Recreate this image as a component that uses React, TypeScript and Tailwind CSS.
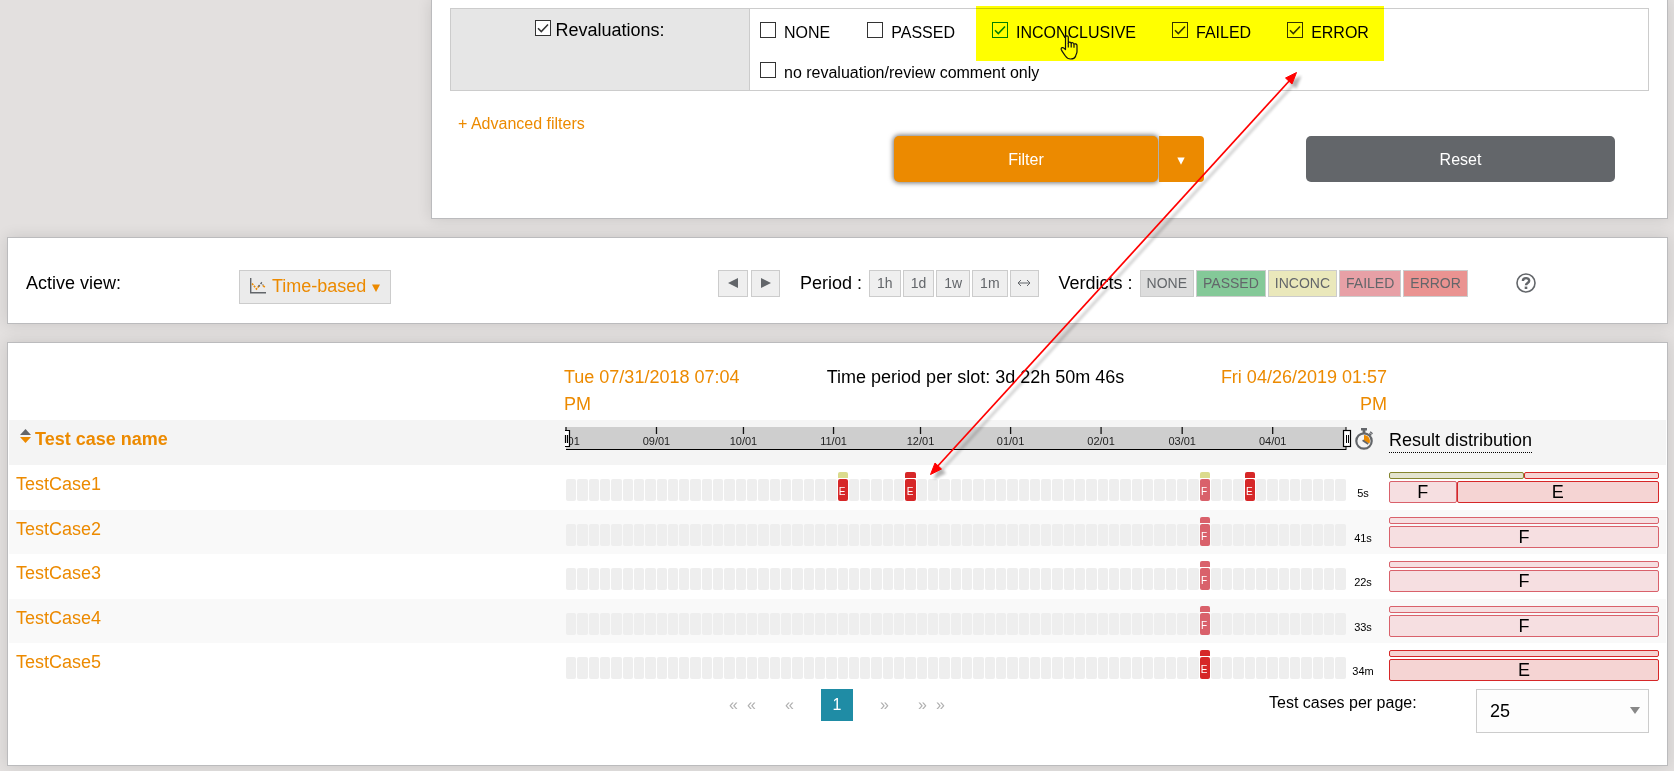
import React from "react";

type Verdict = "E" | "F";

type Mark = { slot: number; verdict: Verdict; cap: "I" | Verdict };
type Share = { kind: "I" | Verdict; percent: number };
type TestCase = {
  name: string;
  duration: string;
  marks: Mark[];
  reviewed: Share[];
  original: Share[];
};

const SLOT_COUNT = 69;

const testCases: TestCase[] = [
  {
    name: "TestCase1",
    duration: "5s",
    marks: [
      { slot: 24, verdict: "E", cap: "I" },
      { slot: 30, verdict: "E", cap: "E" },
      { slot: 56, verdict: "F", cap: "I" },
      { slot: 60, verdict: "E", cap: "E" },
    ],
    reviewed: [
      { kind: "I", percent: 50 },
      { kind: "E", percent: 50 },
    ],
    original: [
      { kind: "F", percent: 25 },
      { kind: "E", percent: 75 },
    ],
  },
  {
    name: "TestCase2",
    duration: "41s",
    marks: [{ slot: 56, verdict: "F", cap: "F" }],
    reviewed: [{ kind: "F", percent: 100 }],
    original: [{ kind: "F", percent: 100 }],
  },
  {
    name: "TestCase3",
    duration: "22s",
    marks: [{ slot: 56, verdict: "F", cap: "F" }],
    reviewed: [{ kind: "F", percent: 100 }],
    original: [{ kind: "F", percent: 100 }],
  },
  {
    name: "TestCase4",
    duration: "33s",
    marks: [{ slot: 56, verdict: "F", cap: "F" }],
    reviewed: [{ kind: "F", percent: 100 }],
    original: [{ kind: "F", percent: 100 }],
  },
  {
    name: "TestCase5",
    duration: "34m",
    marks: [{ slot: 56, verdict: "E", cap: "E" }],
    reviewed: [{ kind: "E", percent: 100 }],
    original: [{ kind: "E", percent: 100 }],
  },
];

const solid = { I: "bg-[#dbdb8d]", F: "bg-[#d9616b]", E: "bg-[#d62728]" };
const outlined = {
  I: "border-[#85852f] bg-[#e4e4d0]",
  F: "border-[#d9616b] bg-[#f6dfe1]",
  E: "border-[#d62728] bg-[#f5d4d3]",
};

const ticks = [
  { at: 0, label: "08/01" },
  { at: 11.6, label: "09/01" },
  { at: 22.75, label: "10/01" },
  { at: 34.3, label: "11/01" },
  { at: 45.45, label: "12/01" },
  { at: 57, label: "01/01" },
  { at: 68.6, label: "02/01" },
  { at: 79, label: "03/01" },
  { at: 90.6, label: "04/01" },
];

function Panel({ className, children }: { className: string; children: React.ReactNode }) {
  return (
    <section
      className={"border border-[#bbbbbd] bg-white shadow-[0_0_14px_rgba(0,0,0,0.12)] " + className}
    >
      {children}
    </section>
  );
}

function Check({
  label,
  checked = false,
  green = false,
  large = false,
}: {
  label: string;
  checked?: boolean;
  green?: boolean;
  large?: boolean;
}) {
  return (
    <label
      className={
        "flex items-baseline whitespace-nowrap " +
        (large ? "gap-1 text-[18px] leading-[27px]" : "gap-2 text-[16px] leading-6")
      }
    >
      <span className={"grid size-4 " + (green ? "text-[#008000]" : "text-[#333333]")}>
        <input
          type="checkbox"
          defaultChecked={checked}
          className="peer size-4 appearance-none border border-current bg-white [grid-area:1/1]"
        />
        <svg
          viewBox="0 0 16 16"
          className="pointer-events-none invisible size-4 [grid-area:1/1] peer-checked:visible"
          fill="none"
          stroke="currentColor"
          strokeWidth="1.5"
        >
          <path d="M3 8.2 6.3 11.6 13 4.4" />
        </svg>
      </span>
      {label}
    </label>
  );
}

function ToolButton({ className, label, children }: { className: string; label?: string; children: React.ReactNode }) {
  return (
    <button
      type="button"
      aria-label={label}
      className={
        "flex h-[27px] items-center justify-center border border-[#cccccc] text-[14px] leading-4 text-[#63666a] " +
        className
      }
    >
      {children}
    </button>
  );
}

function HandCursor() {
  return (
    <svg
      viewBox="0 0 18 25"
      className="pointer-events-none absolute left-[84px] top-[30px] h-[25px] w-[18px]"
      fill="#ffff00"
      stroke="#111"
      strokeWidth="1.2"
      strokeLinejoin="round"
    >
      <path d="M5.5 14.5V2.3C5.5.4 8.3.4 8.3 2.3V8.2C8.6 6.6 11 6.8 11.2 8.4 11.7 7.2 13.9 7.6 14 9.2 14.8 8.4 17 8.8 17 10.6V16.5C17 18.5 15.8 19.6 15.6 21.2 14.6 23.6 12.6 24 10.6 24 8 24 6.6 22.8 5.4 21 4 18.8 2.2 16.6 1.2 14.4.8 12.6 2.8 12 4 13.2Z" />
      <path d="M8.3 8V12.5M11.2 8.4V12.5M14 9.2V12.8" />
    </svg>
  );
}

function FilterPanel() {
  return (
    <Panel className="ml-[424px] border-t-0 px-[18px] pb-9 pt-2">
      <div className="flex border border-[#cccccc]">
        <div className="flex w-[299px] shrink-0 justify-center border-r border-[#cccccc] bg-[#e6e6e6] pt-2">
          <Check label="Revaluations:" checked large />
        </div>
        <div className="flex flex-col gap-4 pb-[5px] pl-[10px] pt-3">
          <div className="flex gap-[37px]">
            <Check label="NONE" />
            <Check label="PASSED" />
            <div className="relative flex gap-9">
              <Check label="INCONCLUSIVE" checked green />
              <Check label="FAILED" checked />
              <Check label="ERROR" checked />
              <div className="pointer-events-none absolute -bottom-4 -left-4 -right-[15px] -top-[15px] bg-[#ffff00] mix-blend-multiply" />
              <div className="pointer-events-none absolute -left-4 -top-4">
                <HandCursor />
              </div>
            </div>
          </div>
          <Check label="no revaluation/review comment only" />
        </div>
      </div>
      <a href="#advanced" className="ml-2 mt-[21px] inline-block align-top text-[16px] leading-6 text-[#ec8a00]">
        + Advanced filters
      </a>
      <div className="flex justify-end gap-[102px] pr-[34px] text-[16px] text-white">
        <div className="flex gap-px">
          <button
            type="button"
            className="h-[46px] w-[264px] rounded-[5px] bg-[#ec8a00] pt-px shadow-[0_0_5px_1px_rgba(0,0,0,0.55)]"
          >
            Filter
          </button>
          <button
            type="button"
            aria-label="Filter options"
            className="flex h-[46px] w-[45px] items-center justify-center rounded-r-[4px] bg-[#ec8a00] pr-[2px]"
          >
            <svg viewBox="0 0 8 8" className="mt-1 size-2" fill="currentColor">
              <path d="M.3 .5H7.700L4 7.800Z" />
            </svg>
          </button>
        </div>
        <button type="button" className="h-[46px] w-[309px] rounded-[5px] bg-[#63666a] pt-px">
          Reset
        </button>
      </div>
    </Panel>
  );
}

function ViewPanel() {
  return (
    <Panel className="mt-[18px] flex h-[87px] items-start pl-[18px] pt-[31px] text-[18px] leading-[27px]">
      <div className="w-[213px] shrink-0 pt-px">Active view:</div>
      <div className="w-[479px] shrink-0">
        <button
          type="button"
          className="mt-px flex h-[34px] items-center gap-[6px] border border-[#cccccc] bg-[#ebebeb] px-[10px] pb-[2px] text-[#ec8a00]"
        >
          <svg viewBox="0 0 16 16" className="size-4" fill="none">
            <path d="M.7 0V14.8H16" stroke="#63666a" strokeWidth="1.4" />
            <path d="M2 5.500 4.500 8.500 6.500 11 9 8" stroke="#ec8a00" strokeWidth="1.600" strokeDasharray="2 1" />
            <path d="M8.500 8.500 11.500 5 13 7" stroke="#63666a" strokeWidth="1.600" strokeDasharray="1.8 1.4" />
            <path d="M12.800 7.500 14.800 9.200" stroke="#ec8a00" strokeWidth="1.600" />
          </svg>
          <span>Time-based</span>
          <svg viewBox="0 0 8 8" className="mt-[3px] size-2" fill="currentColor">
            <path d="M0 .5H8L4 8Z" />
          </svg>
        </button>
      </div>
      <div className="flex items-center whitespace-nowrap">
        <div className="flex gap-[3px]">
          <ToolButton className="w-[30px] bg-[#efefef]" label="Previous">
            <svg viewBox="0 0 10 10" className="size-[10px]" fill="currentColor">
              <path d="M10 0V10L0 5Z" />
            </svg>
          </ToolButton>
          <ToolButton className="w-[29px] bg-[#efefef]" label="Next">
            <svg viewBox="0 0 10 10" className="size-[10px]" fill="currentColor">
              <path d="M0 0V10L10 5Z" />
            </svg>
          </ToolButton>
        </div>
        <span className="ml-5 pt-px">Period :</span>
        <div className="ml-[7px] flex gap-[2px]">
          {["1h", "1d", "1w", "1m"].map((p) => (
            <ToolButton key={p} className="bg-[#efefef] px-[7px]">
              {p}
            </ToolButton>
          ))}
          <ToolButton className="w-[29px] bg-[#efefef]" label="Full range">
            <svg viewBox="0 0 14 8" className="h-2 w-[14px]" fill="none" stroke="currentColor">
              <path d="M1 4H13M4 1 1 4 4 7M10 1 13 4 10 7" />
            </svg>
          </ToolButton>
        </div>
        <span className="ml-5 pt-px">Verdicts :</span>
        <div className="ml-[7px] flex gap-[2px]">
          <ToolButton className="bg-[#dddddd] px-[6px]">NONE</ToolButton>
          <ToolButton className="bg-[#84c998] px-[6px]">PASSED</ToolButton>
          <ToolButton className="bg-[#eae8bb] px-[6px]">INCONC</ToolButton>
          <ToolButton className="bg-[#e7a0a6] px-[6px]">FAILED</ToolButton>
          <ToolButton className="bg-[#ea9391] px-[6px]">ERROR</ToolButton>
        </div>
        <button type="button" aria-label="Help" className="ml-12 text-[#63666a]">
          <svg viewBox="0 0 20 20" className="size-5" fill="none" stroke="currentColor">
            <circle cx="10" cy="10" r="9" strokeWidth="1.6" />
            <path d="M6.900 8C6.900 4.200 13.200 4.200 13.200 7.700 13.200 9.900 10 10 10 12.300" strokeWidth="2.400" />
            <path d="M10 13.600V16" strokeWidth="2.600" />
          </svg>
        </button>
      </div>
    </Panel>
  );
}

function TimeAxis() {
  return (
    <svg className="block h-6 w-full overflow-visible text-[11px]" role="img" aria-label="Time range">
      <rect width="100%" height="22" fill="#cecece" />
      <line x1="0" x2="100%" y1="22.5" y2="22.5" stroke="#000" />
      <line x1="100%" x2="100%" y1="0" y2="23" stroke="#000" />
      {ticks.map((t) => (
        <g key={t.label}>
          <line x1={t.at + "%"} x2={t.at + "%"} y1="0" y2="7" stroke="#111" strokeWidth="1.3" />
          <text x={t.at + "%"} y="18" textAnchor="middle" fill="#222">
            {t.label}
          </text>
        </g>
      ))}
      <rect x="-15" y="8" width="14" height="15" fill="#f4f4f4" />
      <rect x="-1" y="4" width="4" height="15" fill="#fff" />
      <path d="M-1 3.5H3.5V19.5H-1M-.5 8V16M1.5 8V16" stroke="#000" strokeWidth="1.2" fill="none" />
      <svg x="100%" overflow="visible">
        <rect x="-2.5" y="3.5" width="7" height="16" fill="#fff" stroke="#000" strokeWidth="1.2" />
        <path d="M.5 8V16M2.5 8V16" stroke="#000" />
      </svg>
    </svg>
  );
}

function Timeline({ marks }: { marks: Mark[] }) {
  return (
    <div className="flex items-end gap-px">
      {Array.from({ length: SLOT_COUNT }, (_, i) => {
        const mark = marks.find((m) => m.slot === i);
        if (!mark) {
          return <div key={i} className="h-[22px] flex-1 basis-0 rounded-[2px] bg-[#eeeeee]" />;
        }
        return (
          <div key={i} className="flex min-w-0 flex-1 basis-0 flex-col gap-px">
            <div className={"h-[6px] rounded-t-[2px] " + solid[mark.cap]} />
            <div
              className={
                "h-[22px] overflow-hidden rounded-[2px] pr-px pt-1 text-center text-[10px] leading-[18px] text-white " +
                solid[mark.verdict]
              }
            >
              {mark.verdict}
            </div>
          </div>
        );
      })}
    </div>
  );
}

function Shares({ shares, labelled = false }: { shares: Share[]; labelled?: boolean }) {
  return (
    <div className="flex">
      {shares.map((s) => (
        <div
          key={s.kind}
          className={
            "rounded-[2px] border text-center text-[18px] leading-5 " +
            (labelled ? "h-[22px] " : "h-[7px] ") +
            outlined[s.kind]
          }
          style={{ width: `${s.percent}%` }}
        >
          {labelled ? s.kind : null}
        </div>
      ))}
    </div>
  );
}

function Stopwatch() {
  return (
    <svg viewBox="0 0 18 22" className="mx-auto h-[22px] w-[18px]" fill="none">
      <path d="M6 0H12V2.6H10.4V5H7.6V2.6H6Z" fill="#63666a" />
      <path d="M14.3 5.4 16.4 7.2M15.2 3.8 17.6 5.8" stroke="#63666a" strokeWidth="1.4" />
      <circle cx="9" cy="13" r="7.7" stroke="#63666a" strokeWidth="2.2" />
      <path d="M9 13V7A6 6 0 0 1 14.4 15.4Z" fill="#ec8a00" />
      <path d="M7.6 12.2 13.2 16" stroke="#63666a" strokeWidth="1.8" />
    </svg>
  );
}

function ResultsPanel() {
  return (
    <Panel className="mt-[18px] px-px">
      <div className="flex justify-between pb-[2px] pl-[555px] pr-[279px] pt-[21px] text-[18px] leading-[27px]">
        <a href="#from" className="w-[190px] text-[#ec8a00]">
          Tue 07/31/2018 07:04 PM
        </a>
        <span>Time period per slot: 3d 22h 50m 46s</span>
        <a href="#to" className="w-[190px] text-right text-[#ec8a00]">
          Fri 04/26/2019 01:57 PM
        </a>
      </div>
      <table className="w-full table-fixed text-left text-[18px] leading-[27px]">
        <thead>
          <tr className="h-[45px] bg-[#f4f4f4] align-top">
            <th className="w-[557px] pl-[11px] pt-[6px] font-bold">
              <button type="button" className="flex items-start gap-1 text-[#ec8a00]">
                <svg viewBox="0 0 11 14" className="mt-[3px] h-[14px] w-[11px]">
                  <path d="M5.5 0 11 6H0Z" fill="#63666a" />
                  <path d="M5.5 14 11 8H0Z" fill="#ec8a00" />
                </svg>
                Test case name
              </button>
            </th>
            <th className="pt-[7px] font-normal">
              <TimeAxis />
            </th>
            <th className="w-[43px] pr-[7px] pt-2 font-normal">
              <Stopwatch />
            </th>
            <th className="w-[277px] pt-2 font-normal">
              <span className="inline-block border-b border-dotted border-black align-top leading-6">
                Result distribution
              </span>
            </th>
          </tr>
        </thead>
        <tbody>
          {testCases.map((t) => (
            <tr key={t.name} className="h-[45px] align-top even:h-[44px] even:bg-[#f9f9f9]">
              <td className="pl-[7px] pt-[6px]">
                <a href={"#" + t.name} className="text-[#ec8a00]">
                  {t.name}
                </a>
              </td>
              <td className="pt-[7px]">
                <div className="flex h-[29px] flex-col justify-end">
                  <Timeline marks={t.marks} />
                </div>
              </td>
              <td className="pr-[9px] pt-5 text-center text-[11px] leading-4">{t.duration}</td>
              <td className="pr-[7px] pt-[7px]">
                <div className="flex flex-col gap-[2px]">
                  <Shares shares={t.reviewed} />
                  <Shares shares={t.original} labelled />
                </div>
              </td>
            </tr>
          ))}
        </tbody>
      </table>
      <div className="flex h-[77px] items-start pl-[710px] pr-[17px] pt-px text-[16px] leading-6">
        <nav aria-label="Pages" className="flex text-center leading-8 text-[#b0b0b0]">
          <a href="#first" className="flex w-[47px] justify-center gap-[9px]">
            <span>«</span>
            <span>«</span>
          </a>
          <a href="#previous" className="w-[47px]">«</a>
          <a href="#page1" aria-current="page" className="mx-2 size-8 bg-[#1f8ca5] text-white">1</a>
          <a href="#next" className="w-[47px]">»</a>
          <a href="#last" className="flex w-[47px] justify-center gap-[9px]">
            <span>»</span>
            <span>»</span>
          </a>
        </nav>
        <label htmlFor="page-size" className="ml-auto w-[207px] pt-[2px]">
          Test cases per page:
        </label>
        <div className="relative w-[173px]">
          <select
            id="page-size"
            defaultValue="25"
            className="block h-[44px] w-full appearance-none border border-[#cccccc] bg-[#fdfdfd] pl-[13px] text-[18px]"
          >
            <option>10</option>
            <option>25</option>
            <option>50</option>
          </select>
          <svg
            viewBox="0 0 10 7"
            className="pointer-events-none absolute right-[9px] top-[18px] h-[7px] w-[10px]"
            fill="#888888"
          >
            <path d="M0 0H10L5 7Z" />
          </svg>
        </div>
      </div>
    </Panel>
  );
}

function Annotation() {
  return (
    <svg
      viewBox="0 0 380 420"
      className="pointer-events-none absolute left-[924px] top-[65px] h-[420px] w-[380px] overflow-visible"
    >
      <defs>
        <filter id="soft" x="-10%" y="-10%" width="120%" height="120%">
          <feGaussianBlur stdDeviation="1.6" />
        </filter>
        <g id="double-arrow">
          <path d="M12 403 367 14" strokeWidth="1.7" />
          <path d="M6.500 409.500 11 398 17.500 404ZM372.500 7.500 368 19 361.500 13Z" strokeWidth="1" />
        </g>
      </defs>
      <use href="#double-arrow" x="4" y="4" stroke="#000" fill="#000" opacity="0.3" filter="url(#soft)" />
      <use href="#double-arrow" stroke="#ff0000" fill="#ff0000" />
    </svg>
  );
}

export default function App() {
  return (
    <main className="relative min-h-screen overflow-hidden bg-[#e3e0df] pb-[5px] pl-[7px] pr-[6px] font-['Liberation_Sans',Arial,sans-serif] text-black">
      <FilterPanel />
      <ViewPanel />
      <ResultsPanel />
      <Annotation />
    </main>
  );
}
